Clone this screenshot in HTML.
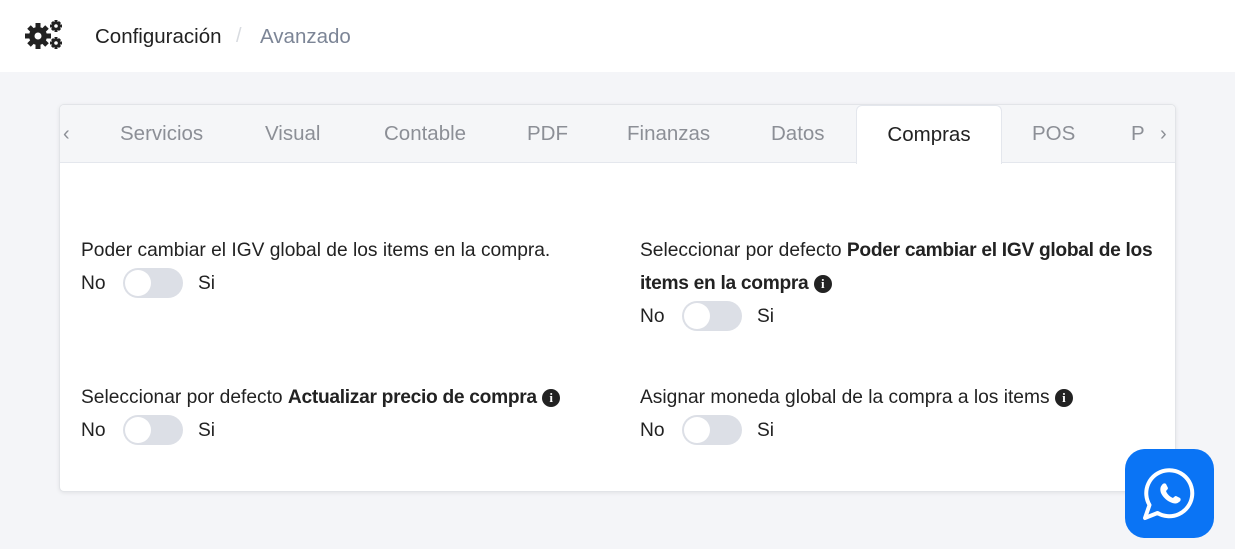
<!DOCTYPE html>
<html><head><meta charset="utf-8"><style>
*{box-sizing:border-box;margin:0;padding:0}
body{width:1235px;height:549px;background:#f4f5f8;font-family:"Liberation Sans",sans-serif;position:relative;overflow:hidden;color:#222}
.hdr{position:absolute;left:0;top:0;width:1235px;height:72px;background:#fff}
.abs{position:absolute;white-space:nowrap}
.card{position:absolute;left:59px;top:104px;width:1117px;height:388px;background:#fff;border:1px solid #e2e4e8;border-radius:5px;box-shadow:0 1px 4px rgba(0,0,0,.08);overflow:hidden}
.tabs{position:absolute;left:0;top:0;width:100%;height:58px;background:#f5f6f8;border-bottom:1px solid #e4e7ed}
.tab{position:absolute;top:0;height:58px;line-height:58px;font-size:20.5px;color:#8c8f96}
.act{left:796px;width:146px;background:#fff;color:#222;text-align:center;border:1px solid #e4e7ed;border-bottom:none;border-radius:6px 6px 0 0;height:59px}
.t{font-size:19.2px;color:#222}
.t b{letter-spacing:-0.3px}
.tg{position:absolute;width:60px;height:30px;border-radius:15px;background:#dcdfe6}
.tg:after{content:"";position:absolute;left:2px;top:2px;width:26px;height:26px;border-radius:50%;background:#fff}
.i{display:inline-block;width:18px;height:18px;border-radius:50%;background:#222;color:#fff;font-size:13px;font-weight:bold;text-align:center;line-height:18px;font-family:"Liberation Serif",serif;vertical-align:1px;margin-left:0}
</style></head><body>
<div class="hdr"></div>
<svg class="abs" style="left:25px;top:19px" width="38" height="32" viewBox="0 0 38 32">
<g fill="#222"><circle cx="13" cy="17" r="9"/><g stroke="#222" stroke-width="5"><line x1="13" y1="4" x2="13" y2="30"/><line x1="0" y1="17" x2="26" y2="17"/><line x1="4" y1="8" x2="22" y2="26"/><line x1="22" y1="8" x2="4" y2="26"/></g>
<circle cx="31" cy="7" r="4.5"/><circle cx="31" cy="24" r="4.5"/>
<g stroke="#222" stroke-width="3"><line x1="31" y1="1" x2="31" y2="13"/><line x1="25" y1="7" x2="37" y2="7"/><line x1="31" y1="18" x2="31" y2="30"/><line x1="25" y1="24" x2="37" y2="24"/><line x1="27" y1="3" x2="35" y2="11"/><line x1="35" y1="3" x2="27" y2="11"/><line x1="27" y1="20" x2="35" y2="28"/><line x1="35" y1="20" x2="27" y2="28"/></g></g>
<circle cx="13" cy="17" r="3.5" fill="#fff"/><circle cx="31" cy="7" r="1.8" fill="#fff"/><circle cx="31" cy="24" r="1.8" fill="#fff"/></svg>
<div class="abs" style="left:95px;top:25px;font-size:20.5px;color:#222">Configuración</div>
<div class="abs" style="left:236px;top:25px;font-size:20px;color:#d8dbe0">/</div>
<div class="abs" style="left:260px;top:25px;font-size:20.5px;color:#7c8596">Avanzado</div>
<div class="card">
<div class="tabs">
<div class="tab" style="left:3px;font-size:20px">‹</div>
<div class="tab" style="left:60px">Servicios</div>
<div class="tab" style="left:205px">Visual</div>
<div class="tab" style="left:324px">Contable</div>
<div class="tab" style="left:467px">PDF</div>
<div class="tab" style="left:567px">Finanzas</div>
<div class="tab" style="left:711px">Datos</div>
<div class="tab act">Compras</div>
<div class="tab" style="left:972px">POS</div>
<div class="tab" style="left:1071px;width:13px;overflow:hidden">P</div>
<div class="tab" style="left:1100px;font-size:20px">›</div>
</div>
</div>
<div class="abs t" style="left:81px;top:240px">Poder cambiar el IGV global de los items en la compra.</div>
<div class="abs t" style="left:81px;top:273px">No</div><div class="tg" style="left:123px;top:268px"></div><div class="abs t" style="left:198px;top:273px">Si</div>
<div class="abs t" style="left:640px;top:240px">Seleccionar por defecto <b>Poder cambiar el IGV global de los</b></div>
<div class="abs t" style="left:640px;top:273px"><b>items en la compra</b> <span class="i">i</span></div>
<div class="abs t" style="left:640px;top:306px">No</div><div class="tg" style="left:682px;top:301px"></div><div class="abs t" style="left:757px;top:306px">Si</div>
<div class="abs t" style="left:81px;top:387px">Seleccionar por defecto <b>Actualizar precio de compra</b> <span class="i">i</span></div>
<div class="abs t" style="left:81px;top:420px">No</div><div class="tg" style="left:123px;top:415px"></div><div class="abs t" style="left:198px;top:420px">Si</div>
<div class="abs t" style="left:640px;top:387px">Asignar moneda global de la compra a los items <span class="i">i</span></div>
<div class="abs t" style="left:640px;top:420px">No</div><div class="tg" style="left:682px;top:415px"></div><div class="abs t" style="left:757px;top:420px">Si</div>
<div class="abs" style="left:1125px;top:449px;width:89px;height:89px;border-radius:20px;background:#0a74f5">
<svg width="89" height="89" viewBox="0 0 89 89"><path d="M20 69 L24.5 56 A23 23 0 1 1 32.5 64 Z" fill="none" stroke="#fff" stroke-width="4" stroke-linejoin="round"/>
<path d="M37 36c1-2 3-2 4-1l2 4c0 1-1 2-2 3 1 3 4 6 7 7 1-1 2-2 3-2l4 2c1 1 1 3-1 4-2 2-5 2-9 0-4-2-7-5-9-9-1-3-1-6 1-8z" fill="#fff"/></svg></div>
</body></html>
